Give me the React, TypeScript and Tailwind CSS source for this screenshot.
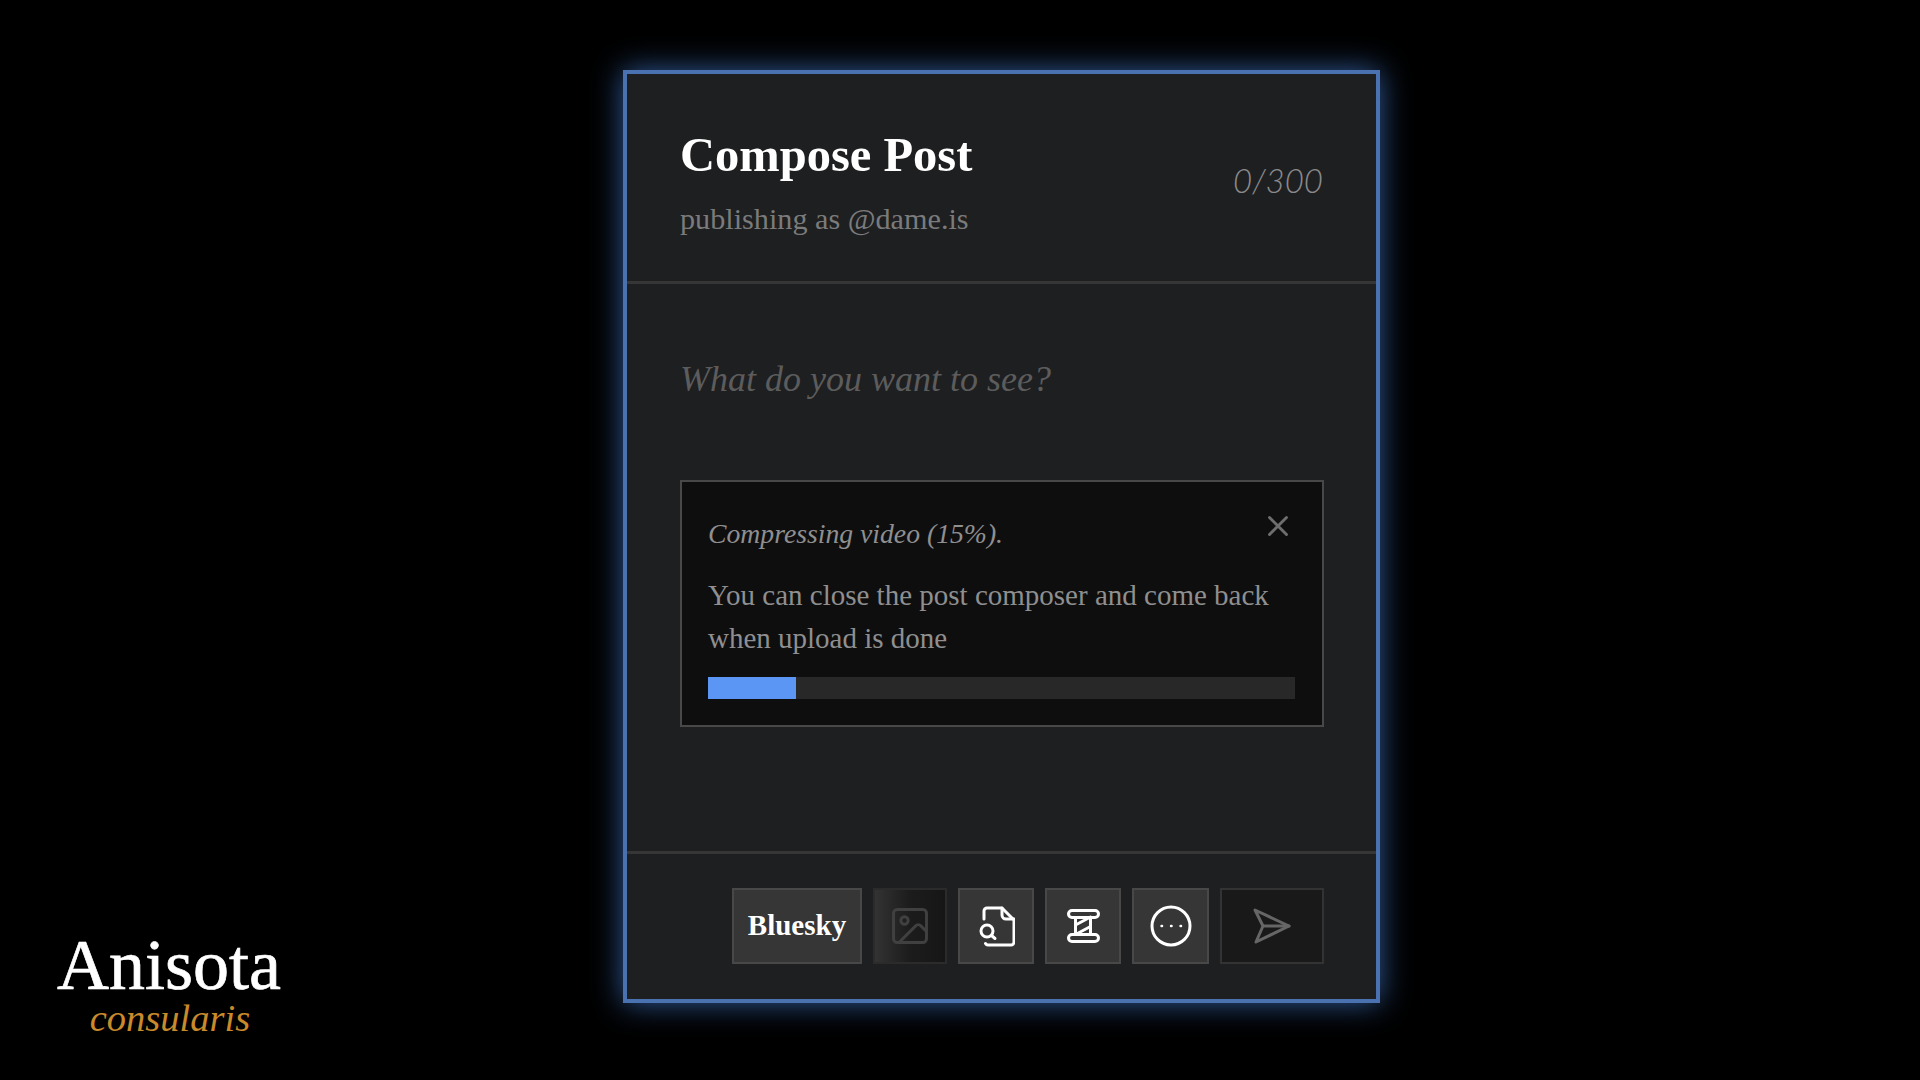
import React from 'react';
import { Image, X } from 'lucide-react';

const serif = "font-['Liberation_Serif',serif]";

const ToolButton: React.FC<{ className?: string; children: React.ReactNode }> = ({ className = '', children }) => (
  <div className={`flex h-[76px] shrink-0 items-center justify-center border-2 ${className}`}>
    {children}
  </div>
);

const FileSearchIcon = () => (
  <svg width="38" height="44" viewBox="0 0 38 44" fill="none" stroke="#fff" strokeWidth="3" strokeLinecap="round" strokeLinejoin="round">
    <path d="M7 15V7a3 3 0 0 1 3-3h15l12 12v22a3 3 0 0 1-3 3H11a3 3 0 0 1-2.5-1.5" />
    <path d="M25 4v7a4 4 0 0 0 4 4h8" />
    <circle cx="10" cy="27" r="6" />
    <path d="m14.5 31.5 3.5 3" />
  </svg>
);

const ScrollIcon = () => (
  <svg width="38" height="40" viewBox="0 0 38 40" fill="none" stroke="#fff" strokeWidth="3" strokeLinecap="round" strokeLinejoin="round">
    <rect x="4.5" y="4.5" width="30" height="7" rx="3.5" />
    <rect x="4.5" y="28.5" width="30" height="7" rx="3.5" />
    <path d="M11.5 11.5v17M26.5 11.5v17" />
    <path d="m11.5 19 15-8M11.5 28.5l15-8" />
  </svg>
);

const EllipsisIcon = () => (
  <svg width="42" height="42" viewBox="0 0 42 42" fill="none" stroke="#fff" strokeLinecap="round">
    <circle cx="21" cy="21" r="19" strokeWidth="3" />
    <path d="M11.5 21h.6M21 21h.6M30.5 21h.6" strokeWidth="2.4" />
  </svg>
);

const SendIcon = () => (
  <svg width="40" height="38" viewBox="0 0 40 38" fill="none" stroke="#666" strokeWidth="3" strokeLinecap="round" strokeLinejoin="round">
    <path d="M3 3 37 19 4 35l7-16Z" />
    <path d="M11 19h26" />
  </svg>
);

export default function App() {
  return (
    <div className="flex h-screen w-full overflow-hidden bg-black">
      <div className="flex w-[623px] shrink-0 flex-col justify-end pb-[40px] pl-[58px]">
        <div className={`flex w-[222px] flex-col items-center ${serif}`}>
          <div className="text-[72px] leading-[62px] text-white [-webkit-text-stroke:0.7px_#fff]">Anisota</div>
          <div className="pl-[2px] text-[38.5px] italic leading-[44px] text-[#c98a2b]">consularis</div>
        </div>
      </div>

      <div className="pt-[70px]">
        <div className={`flex h-[933px] w-[757px] flex-col border-4 border-[#4a72b0] bg-[#1e1f21] shadow-[0_0_28px_rgba(70,130,220,0.7)] ${serif}`}>
          <header className="flex h-[210px] shrink-0 items-center justify-between border-b-[3px] border-[#363636] pl-[53px] pr-[53px] pt-[6px]">
            <div className="pt-[3px]">
              <h1 className="text-[48.5px] font-bold leading-[56px] text-white">Compose Post</h1>
              <p className="mt-[18px] text-[30.2px] leading-[36px] text-[#7b7b7b]">publishing as @dame.is</p>
            </div>
            <span className="font-['Lato',sans-serif] text-[33px] font-light italic text-[#8a8a8a]">0/300</span>
          </header>

          <main className="flex min-h-0 flex-1 flex-col pl-[53px] pr-[52px]">
            <p className="pt-[71px] text-[36px] italic leading-[48px] text-[#5c5c5c]">What do you want to see?</p>

            <section className="relative mt-[77px] h-[247px] border-2 border-[#484848] bg-[#0e0e0f] pl-[26px] pr-[27px] pt-[32px]">
              <X className="absolute right-[27px] top-[27px] text-[#6e6e6e]" size={34} strokeWidth={2} />
              <p className="text-[27.7px] italic leading-[40px] text-[#8f8f8f]">Compressing video (15%).</p>
              <p className="mt-[20px] text-[29px] leading-[43px] text-[#8f8f8f]">
                You can close the post composer and come back
                <br />
                when upload is done
              </p>
              <div className="mt-[17px] h-[22px] w-full bg-[#282828]">
                <div className="h-full bg-[#5b96f5]" style={{ width: '15%' }} />
              </div>
            </section>
          </main>

          <footer className="flex h-[148px] shrink-0 items-center justify-end gap-[11px] border-t-[3px] border-[#363636] pb-[2px] pr-[52px]">
            <ToolButton className="w-[130px] border-[#484848] bg-[#363636] text-[29px] font-bold text-white">Bluesky</ToolButton>
            <ToolButton className="w-[74px] border-[#2b2b2b] bg-gradient-to-r from-[#333333] via-[#1c1c1c] to-[#161616]">
              <Image className="text-[#404040]" size={44} strokeWidth={1.6} />
            </ToolButton>
            <ToolButton className="w-[76px] border-[#484848] bg-[#363636]"><FileSearchIcon /></ToolButton>
            <ToolButton className="w-[76px] border-[#484848] bg-[#363636]"><ScrollIcon /></ToolButton>
            <ToolButton className="w-[77px] border-[#484848] bg-[#363636]"><EllipsisIcon /></ToolButton>
            <ToolButton className="w-[104px] border-[#333333] bg-[#191919]"><SendIcon /></ToolButton>
          </footer>
        </div>
      </div>
    </div>
  );
}
